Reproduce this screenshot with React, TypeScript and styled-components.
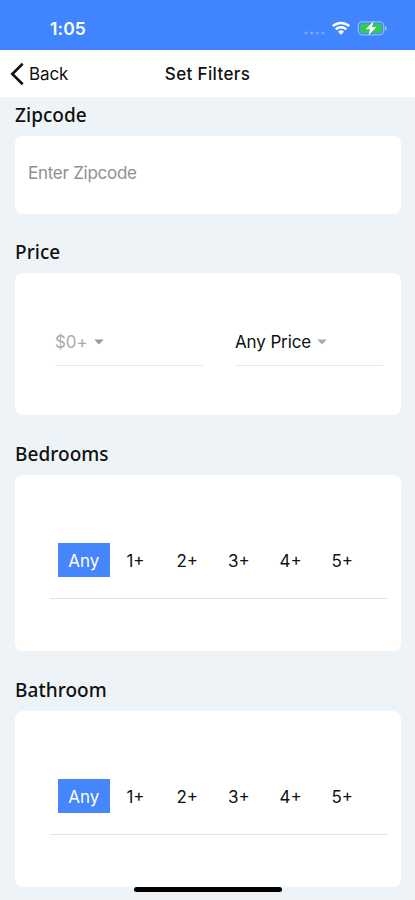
import React from "react";
import styled, { createGlobalStyle } from "styled-components";

const GlobalStyle = createGlobalStyle`
  * { box-sizing: border-box; }
  body { margin: 0; background: #eef3f8; }
`;

const Screen = styled.div`
  position: relative;
  width: 415px;
  height: 900px;
  overflow: hidden;
  display: flex;
  flex-direction: column;
  background: #eef3f8;
  color: #111;
  font-family: Inter, "Liberation Sans", sans-serif;
`;

const StatusBar = styled.header`
  flex: none;
  height: 50px;
  display: flex;
  align-items: flex-start;
  justify-content: space-between;
  padding: 18px 26px 0 50px;
  background: #4084fe;
  color: #fff;
`;

const Clock = styled.span`
  font-size: 17.5px;
  line-height: 22px;
  font-weight: 600;
  letter-spacing: 0.1px;
`;

const StatusIcons = styled.div`
  display: flex;
  align-items: center;
  height: 20px;
`;

const NavBar = styled.nav`
  flex: none;
  height: 47px;
  display: grid;
  grid-template-columns: 1fr auto 1fr;
  align-items: center;
  background: #fff;
`;

const BackButton = styled.button`
  display: flex;
  align-items: center;
  gap: 5px;
  padding: 0 0 0 10px;
  border: 0;
  background: none;
  color: #111;
  font: 400 17px/22px Inter, sans-serif;
  letter-spacing: -0.1px;
`;

const Title = styled.h1`
  margin: 0;
  font-size: 17px;
  line-height: 22px;
  font-weight: 500;
  letter-spacing: 0.35px;
`;

const Content = styled.main`
  padding: 0 14px 0 15px;
`;

const SectionTitle = styled.h2<{ $height: number; $offset: number }>`
  margin: 0;
  height: ${(p) => p.$height}px;
  padding-top: ${(p) => p.$offset}px;
  font: 500 19px/26px "Noto Sans", sans-serif;
  letter-spacing: 0.05px;
`;

const Card = styled.section<{ $height: number }>`
  height: ${(p) => p.$height}px;
  border-radius: 8px;
  background: #fff;
`;

const ZipInput = styled.input`
  display: block;
  width: 100%;
  height: 74px;
  padding: 0 13px;
  border: 0;
  outline: 0;
  background: none;
  font: 400 17px/22px Inter, sans-serif;
  letter-spacing: -0.27px;
  &::placeholder { color: #8f8f8f; opacity: 1; }
`;

const PriceRow = styled.div`
  display: grid;
  grid-template-columns: 148px 148px;
  column-gap: 32px;
  padding: 45px 0 0 40px;
`;

const Dropdown = styled.button<{ $muted?: boolean }>`
  display: flex;
  align-items: center;
  gap: 6px;
  height: 48px;
  padding: 0;
  border: 0;
  border-bottom: 1px solid #e8e8e8;
  background: none;
  color: ${(p) => (p.$muted ? "#aaa" : "#111")};
  font: 400 17px/22px Inter, sans-serif;
  letter-spacing: -0.12px;
`;

const OptionRow = styled.div`
  display: flex;
  height: 124px;
  margin: 0 13px 0 35px;
  padding: 68px 0 0 8px;
  border-bottom: 1px solid #e3e4e6;
`;

const Option = styled.button<{ $selected?: boolean }>`
  width: 51.7px;
  height: 34px;
  padding: 2px 0 0;
  border: 0;
  background: ${(p) => (p.$selected ? "#4586fc" : "transparent")};
  color: ${(p) => (p.$selected ? "#fff" : "#111")};
  font: 400 17px/22px Inter, sans-serif;
  letter-spacing: 0;
`;

const HomeIndicator = styled.div`
  position: absolute;
  left: 134px;
  top: 887px;
  width: 148px;
  height: 5px;
  border-radius: 3px;
  background: #000;
`;

const choices = ["Any", "1+", "2+", "3+", "4+", "5+"];

const Caret = ({ color }: { color: string }) => (
  <svg width="10" height="6" viewBox="0 0 10 6">
    <path d="M0.3 0.4h9.4L5 5.6z" fill={color} />
  </svg>
);

const Options = () => (
  <OptionRow>
    {choices.map((c, i) => (
      <Option key={c} $selected={i === 0}>{c}</Option>
    ))}
  </OptionRow>
);

export default function App() {
  return (
    <>
      <GlobalStyle />
      <Screen>
        <StatusBar>
          <Clock>1:05</Clock>
          <StatusIcons>
            <svg width="86" height="20" viewBox="0 0 86 20">
              <g fill="#fff" fillOpacity="0.3">
                <circle cx="3" cy="15" r="1.6" />
                <circle cx="8.7" cy="15" r="1.6" />
                <circle cx="14.3" cy="15" r="1.6" />
                <circle cx="20" cy="15" r="1.6" />
              </g>
              <g fill="none" stroke="#fff" strokeWidth="2.5">
                <path d="M29.8 8.2a12 12 0 0 1 16.4 0" />
                <path d="M32.7 11.4a7.7 7.7 0 0 1 10.6 0" />
              </g>
              <path d="M38 16.8l-3-3.1a4.4 4.4 0 0 1 6 0z" fill="#fff" />
              <rect x="55.3" y="3.8" width="25.4" height="13" rx="4" fill="none" stroke="#fff" strokeOpacity="0.42" strokeWidth="1.3" />
              <rect x="57" y="5.4" width="22" height="9.8" rx="2.5" fill="#35c85b" />
              <path d="M82 8v4.6c1.2-.5 1.8-1.3 1.8-2.3S83.2 8.5 82 8z" fill="#fff" fillOpacity="0.5" />
              <path d="M70.6 3.3L62.6 11.2h4.5L65.4 17.2 73.4 9.3h-4.5z" fill="#fff" />
            </svg>
          </StatusIcons>
        </StatusBar>
        <NavBar>
          <BackButton>
            <svg width="14" height="24" viewBox="0 0 14 24">
              <path d="M12.7 1.8L2.3 12l10.4 10.2" fill="none" stroke="#111" strokeWidth="2.6" />
            </svg>
            Back
          </BackButton>
          <Title>Set Filters</Title>
        </NavBar>
        <Content>
          <SectionTitle $height={39} $offset={5}>Zipcode</SectionTitle>
          <Card $height={78}>
            <ZipInput placeholder="Enter Zipcode" />
          </Card>
          <SectionTitle $height={59} $offset={25}>Price</SectionTitle>
          <Card $height={142}>
            <PriceRow>
              <Dropdown $muted>$0+ <Caret color="#999" /></Dropdown>
              <Dropdown>Any Price <Caret color="#aaa" /></Dropdown>
            </PriceRow>
          </Card>
          <SectionTitle $height={60} $offset={26}>Bedrooms</SectionTitle>
          <Card $height={176}>
            <Options />
          </Card>
          <SectionTitle $height={60} $offset={26}>Bathroom</SectionTitle>
          <Card $height={176}>
            <Options />
          </Card>
        </Content>
        <HomeIndicator />
      </Screen>
    </>
  );
}
